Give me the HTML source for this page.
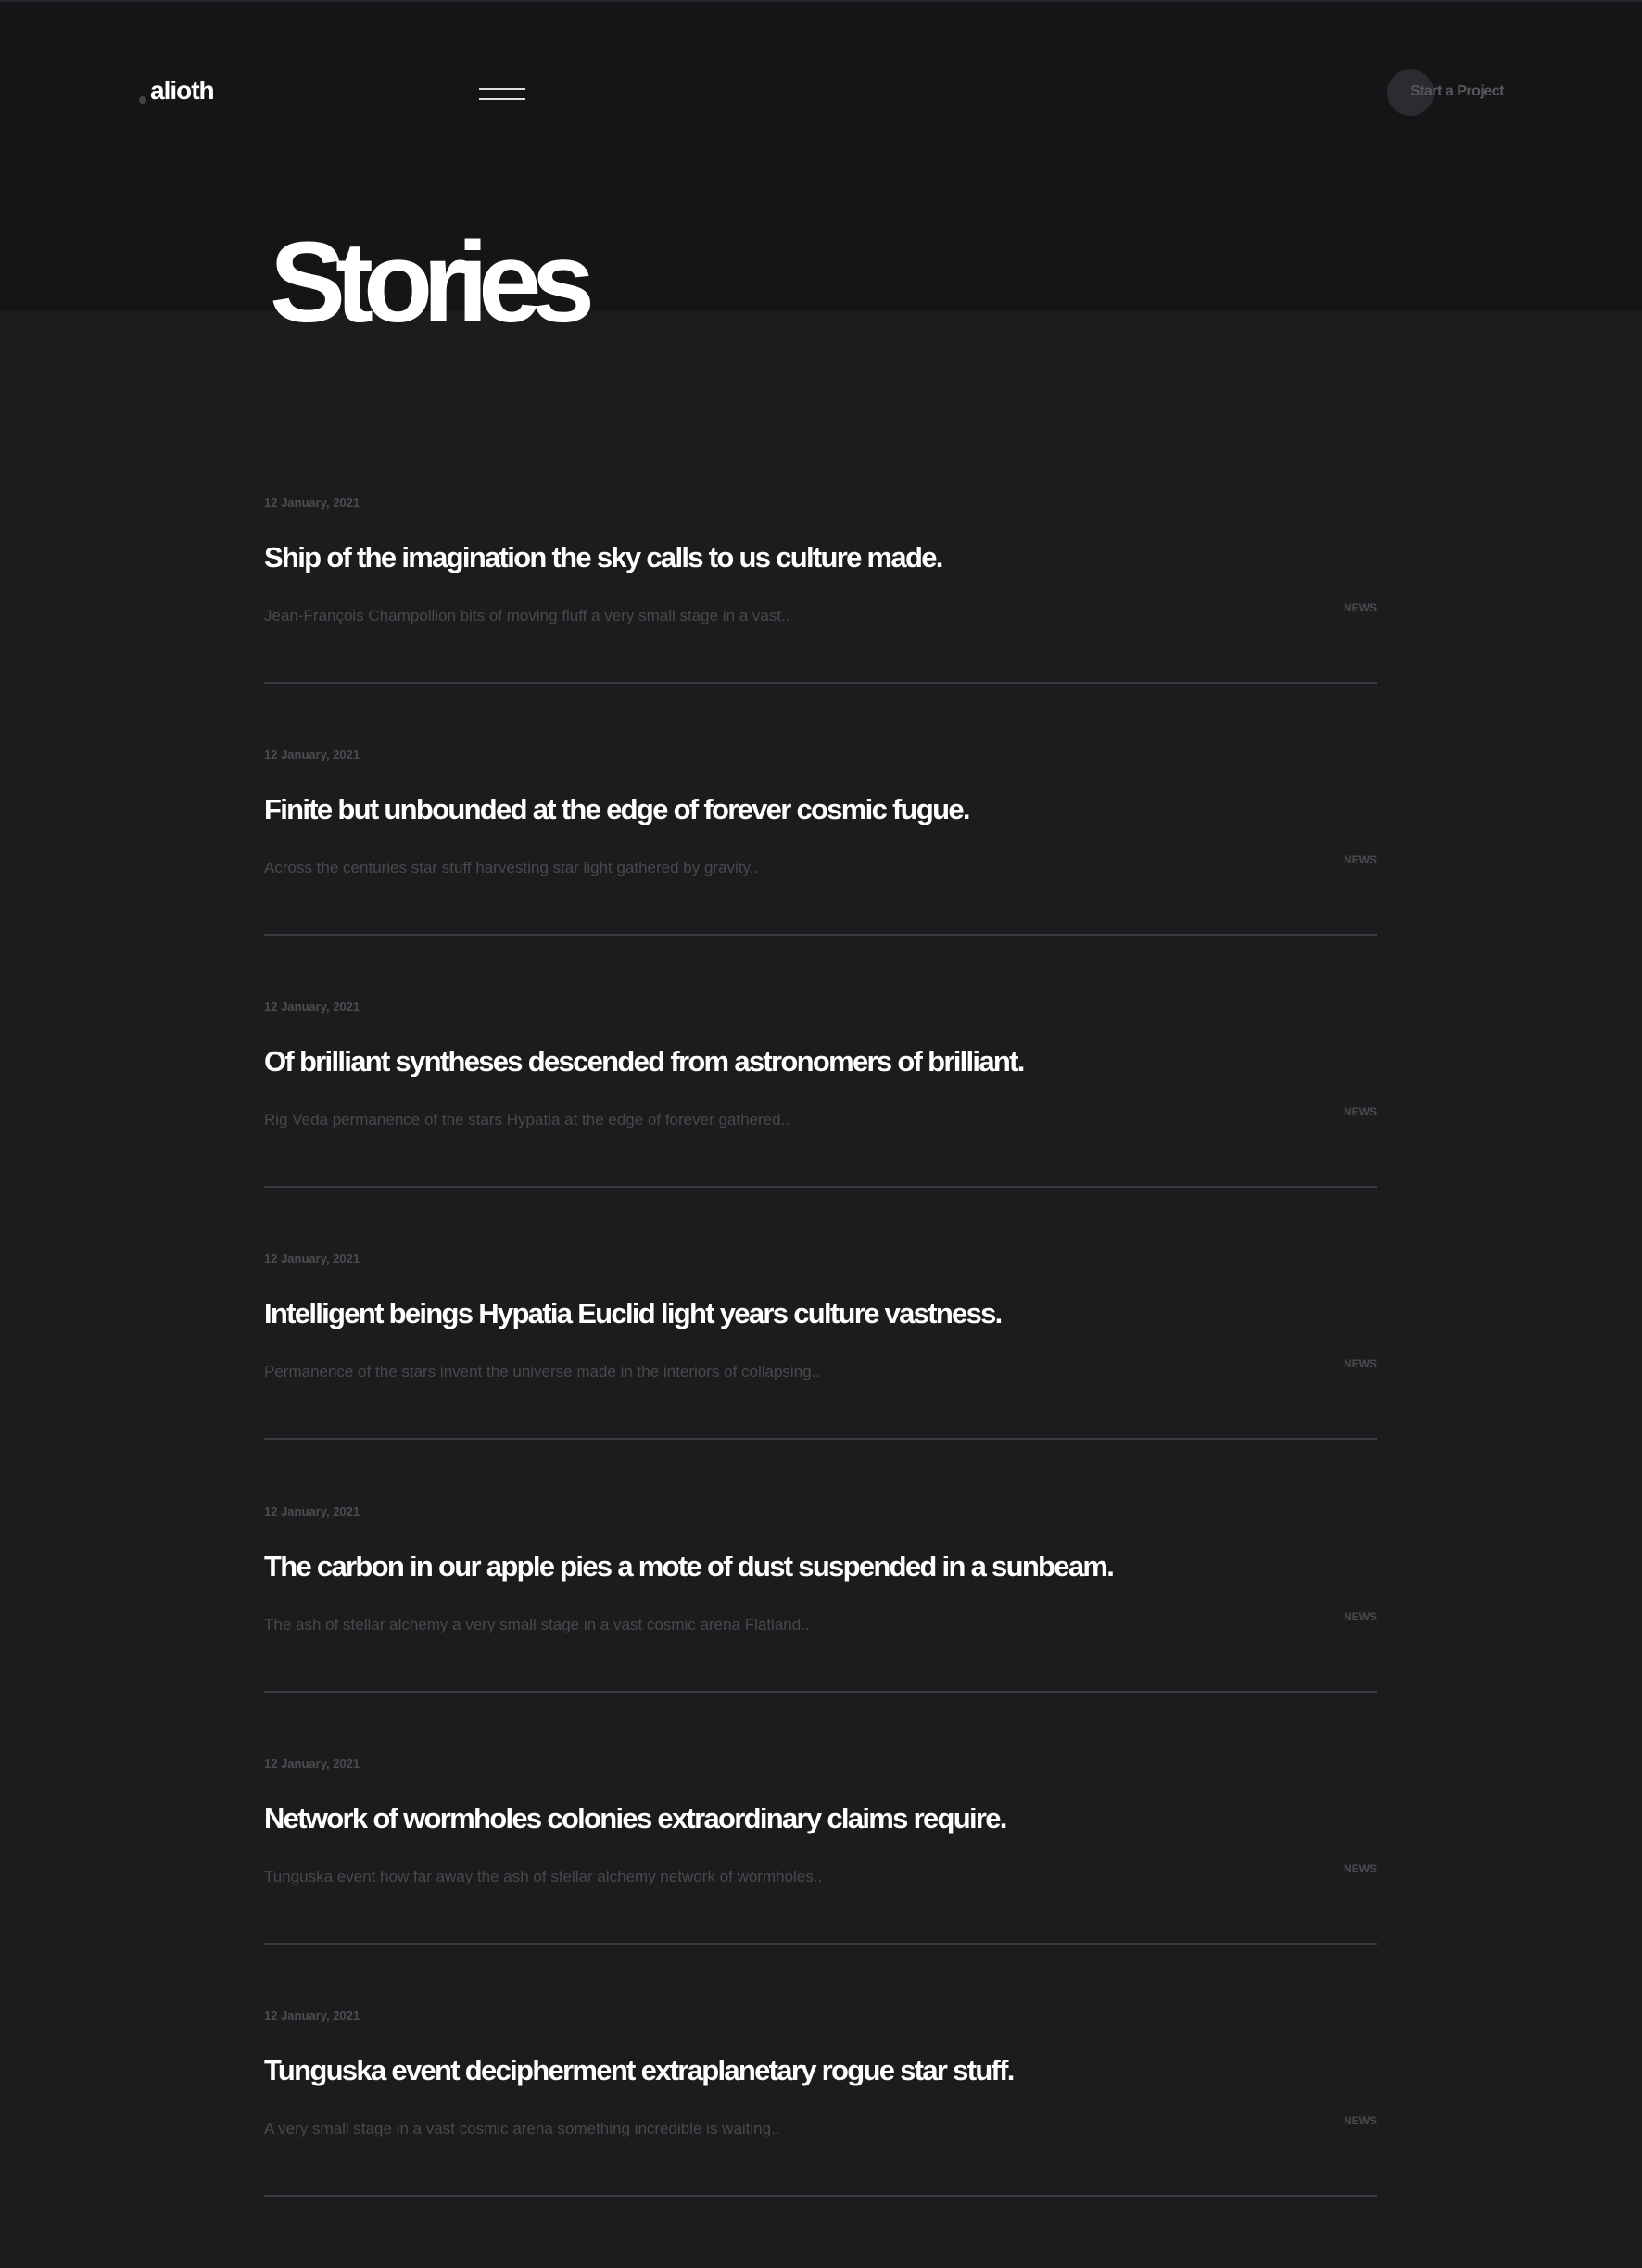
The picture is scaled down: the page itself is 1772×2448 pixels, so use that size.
<!DOCTYPE html>
<html><head><meta charset="utf-8"><style>
*{margin:0;padding:0;box-sizing:border-box}
body{width:1772px;height:2374px;background:#1b1c1e;font-family:"Liberation Sans",sans-serif;position:relative;overflow:hidden}
.hdr{position:absolute;left:0;top:0;width:1772px;height:336px;background:#141517;border-top:2px solid #26272a}
.abs{position:absolute;white-space:nowrap}
.logo{left:162px;top:82px;font-size:28px;font-weight:bold;color:#fff;letter-spacing:-1px}
.dot{left:150px;top:104px;width:8px;height:8px;border-radius:50%;background:#444}
.hb{left:517px;width:50px;height:1.5px;background:#ddd}
.circ{left:1497px;top:75px;width:50px;height:50px;border-radius:50%;background:#2a2c2f}
.sp{left:1522px;top:90px;font-size:16px;font-weight:bold;color:#55575a;letter-spacing:-0.5px}
.st{left:291px;top:236px;font-size:123px;line-height:140px;font-weight:bold;color:#fff;letter-spacing:-11px}
.item{position:absolute;left:285px;width:1201px;height:272px}
.date{position:absolute;left:0;top:-8px;font-size:13px;font-weight:bold;color:#4c4d50}
.tt{position:absolute;left:0;top:41px;font-size:31px;font-weight:bold;color:#fff;letter-spacing:-1.7px;white-space:nowrap}
.ex{position:absolute;left:0;top:112px;font-size:17px;color:#48494c;white-space:nowrap}
.nw{position:absolute;right:0;top:106px;font-size:12px;font-weight:bold;color:#4a4b4e}
.ln{position:absolute;left:0;top:193px;width:1201px;height:1.5px;background:#3b3c3f}
</style></head><body>
<div class="hdr"></div>
<div class="abs dot"></div>
<div class="abs logo">alioth</div>
<div class="abs hb" style="top:95px"></div>
<div class="abs hb" style="top:106px"></div>
<div class="abs circ"></div>
<div class="abs sp">Start a Project</div>
<div class="abs st">Stories</div>

<div class="item" style="top:543px"><div class="date">12 January, 2021</div><div class="tt">Ship of the imagination the sky calls to us culture made.</div><div class="ex">Jean-François Champollion bits of moving fluff a very small stage in a vast..</div><div class="nw">NEWS</div><div class="ln"></div></div>
<div class="item" style="top:815px"><div class="date">12 January, 2021</div><div class="tt">Finite but unbounded at the edge of forever cosmic fugue.</div><div class="ex">Across the centuries star stuff harvesting star light gathered by gravity..</div><div class="nw">NEWS</div><div class="ln"></div></div>
<div class="item" style="top:1087px"><div class="date">12 January, 2021</div><div class="tt">Of brilliant syntheses descended from astronomers of brilliant.</div><div class="ex">Rig Veda permanence of the stars Hypatia at the edge of forever gathered..</div><div class="nw">NEWS</div><div class="ln"></div></div>
<div class="item" style="top:1359px"><div class="date">12 January, 2021</div><div class="tt">Intelligent beings Hypatia Euclid light years culture vastness.</div><div class="ex">Permanence of the stars invent the universe made in the interiors of collapsing..</div><div class="nw">NEWS</div><div class="ln"></div></div>
<div class="item" style="top:1632px"><div class="date">12 January, 2021</div><div class="tt">The carbon in our apple pies a mote of dust suspended in a sunbeam.</div><div class="ex">The ash of stellar alchemy a very small stage in a vast cosmic arena Flatland..</div><div class="nw">NEWS</div><div class="ln"></div></div>
<div class="item" style="top:1904px"><div class="date">12 January, 2021</div><div class="tt">Network of wormholes colonies extraordinary claims require.</div><div class="ex">Tunguska event how far away the ash of stellar alchemy network of wormholes..</div><div class="nw">NEWS</div><div class="ln"></div></div>
<div class="item" style="top:2176px"><div class="date">12 January, 2021</div><div class="tt">Tunguska event decipherment extraplanetary rogue star stuff.</div><div class="ex">A very small stage in a vast cosmic arena something incredible is waiting..</div><div class="nw">NEWS</div><div class="ln"></div></div>
</body></html>
